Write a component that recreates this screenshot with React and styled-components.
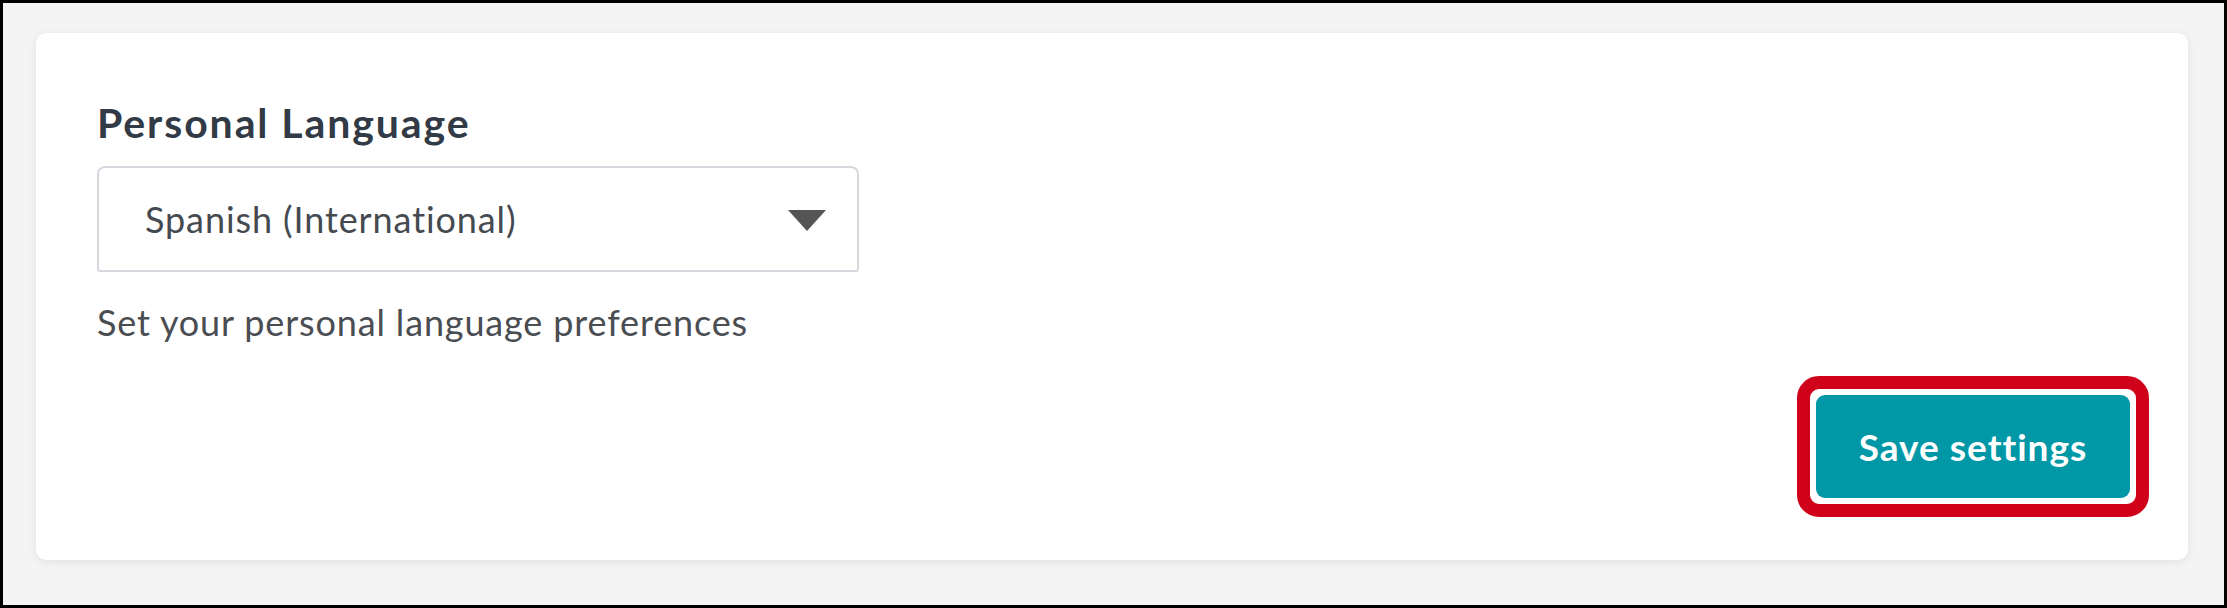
import React from 'react'
import styled, { createGlobalStyle } from 'styled-components'

const GlobalStyle = createGlobalStyle`
  html, body {
    margin: 0;
    padding: 0;
    background: #ffffff;
  }
  * {
    box-sizing: border-box;
  }
`

const App = () => (
  <>
    <GlobalStyle />
    <Frame>
      <Card>
        <Heading>Personal Language</Heading>
        <Select>
          <SelectValue>Spanish (International)</SelectValue>
          <Caret viewBox='0 0 38 21' aria-hidden='true'>
            <path d='M0 0 H38 L19 21 Z' fill='#555555' />
          </Caret>
        </Select>
        <Helper>Set your personal language preferences</Helper>
        <Footer>
          <Highlight>
            <SaveBtn type='button'>Save settings</SaveBtn>
          </Highlight>
        </Footer>
      </Card>
    </Frame>
  </>
)

export default App

const Frame = styled.div`
  width: 2227px;
  height: 608px;
  border: 3px solid #000;
  background: #f4f4f5;
  padding: 30px 36px 0 33px;
  font-family: Lato, 'Liberation Sans', sans-serif;
`

const Card = styled.div`
  background: #fff;
  border-radius: 10px;
  box-shadow: 0 2px 8px rgba(0, 0, 0, 0.08);
  padding: 65px 39px 43px 61px;
  display: flex;
  flex-direction: column;
`

const Heading = styled.h2`
  margin: 0;
  font-size: 41px;
  line-height: 1.2;
  font-weight: 700;
  letter-spacing: 1.9px;
  color: #323a46;
`

const Select = styled.div`
  margin-top: 19px;
  width: 762px;
  height: 106px;
  border: 2px solid #d5d9dd;
  border-radius: 8px 8px 3px 3px;
  display: flex;
  align-items: center;
  justify-content: space-between;
  padding: 0 31px 0 46px;
`

const SelectValue = styled.span`
  font-size: 36px;
  color: #454a50;
  letter-spacing: 0.9px;
`

const Caret = styled.svg`
  width: 38px;
  height: 21px;
  margin-top: 2px;
`

const Helper = styled.p`
  margin: 29px 0 0;
  font-size: 36px;
  line-height: 1.2;
  color: #4a4d52;
  letter-spacing: 0.85px;
`

const Footer = styled.div`
  margin-top: 32px;
  display: flex;
  justify-content: flex-end;
`

const Highlight = styled.div`
  border: 13px solid #d0021b;
  border-radius: 22px;
  padding: 6px;
  background: #fff;
`

const SaveBtn = styled.button`
  display: block;
  width: 314px;
  height: 103px;
  border: 0;
  border-radius: 9px;
  background: #0098a6;
  color: #fff;
  font-family: Lato, 'Liberation Sans', sans-serif;
  font-size: 37px;
  font-weight: 700;
  letter-spacing: 1px;
  cursor: pointer;
`
